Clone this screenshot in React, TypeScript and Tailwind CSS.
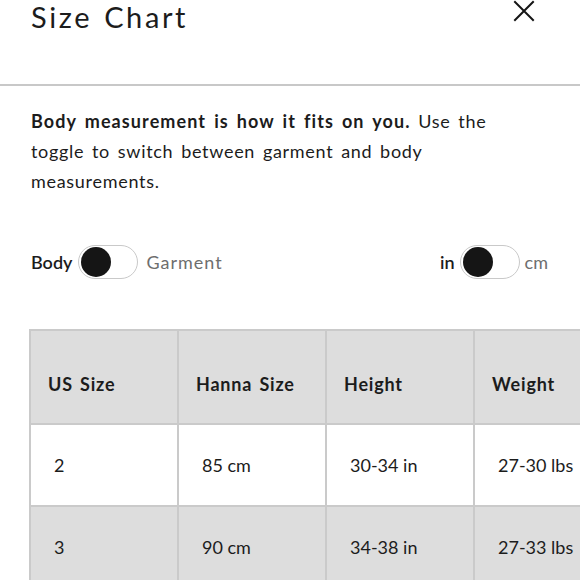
import React from "react";

function Toggle() {
  return (
    <div className="w-[60px] h-[34px] rounded-full border-[1.5px] border-[#c9c9c9] bg-white flex items-center pl-[2px]">
      <div className="w-[30px] h-[30px] rounded-full bg-[#151515]" />
    </div>
  );
}

const header = ["US Size", "Hanna Size", "Height", "Weight"];
const rows = [
  ["2", "85 cm", "30-34 in", "27-30 lbs"],
  ["3", "90 cm", "34-38 in", "27-33 lbs"],
];

export default function App() {
  return (
    <div className="w-[580px] h-[580px] overflow-hidden bg-white text-[#1c1c1c] font-['Lato','Noto_Sans',sans-serif]">
      <div className="h-[84px] flex justify-between items-start pl-[31px] pr-[45px]">
        <h1 className="text-[29px] leading-[34px] font-normal tracking-[2.6px] [word-spacing:2px]">Size Chart</h1>
        <svg width="22" height="22" viewBox="0 0 22 22" className="mt-[0px]">
          <path d="M2 2 L20 20 M20 2 L2 20" stroke="#151515" strokeWidth="2" strokeLinecap="square" />
        </svg>
      </div>
      <div className="h-[2px] bg-[#c8c8c8]" />
      <p className="mt-[20px] pl-[31px] text-[18px] leading-[30px] tracking-[0.7px] [word-spacing:2.5px]">
        <span className="font-bold tracking-[1.1px]">Body measurement is how it fits on you.</span> Use the
        <br />
        toggle to switch between garment and body
        <br />
        measurements.
      </p>
      <div className="mt-[49px] flex items-center justify-between pl-[31px] pr-[32px] text-[18px]">
        <div className="flex items-center">
          <span className="font-semibold mr-[6px]">Body</span>
          <Toggle />
          <span className="ml-[8px] text-[#6e6e6e] tracking-[1px]">Garment</span>
        </div>
        <div className="flex items-center">
          <span className="font-semibold mr-[5px]">in</span>
          <Toggle />
          <span className="ml-[5px] text-[#6e6e6e]">cm</span>
        </div>
      </div>
      <div className="mt-[50px] ml-[29px] w-[640px] border-l-2 border-t-2 border-[#cacaca]">
        <div className="flex bg-[#dddddd]">
          {header.map((h) => (
            <div
              key={h}
              className="w-[148px] h-[94px] shrink-0 border-r-2 border-b-2 border-[#cacaca] flex items-center pl-[17px] pt-[14px] text-[18px] font-bold tracking-[0.8px] [word-spacing:2px]"
            >
              {h}
            </div>
          ))}
        </div>
        {rows.map((r, i) => (
          <div key={i} className={`flex ${i % 2 === 1 ? "bg-[#dddddd]" : "bg-white"}`}>
            {r.map((c, j) => (
              <div
                key={j}
                className="w-[148px] h-[82px] shrink-0 border-r-2 border-b-2 border-[#cacaca] flex items-center pl-[23px] text-[18px]"
              >
                {c}
              </div>
            ))}
          </div>
        ))}
      </div>
    </div>
  );
}
